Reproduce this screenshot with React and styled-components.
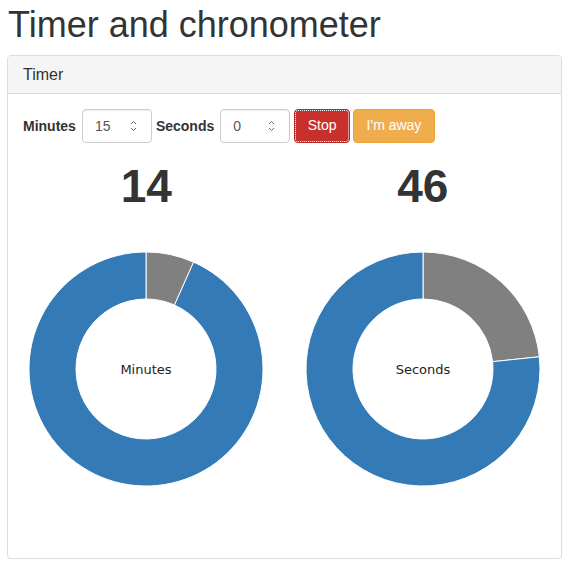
import styled, { createGlobalStyle } from "styled-components";

const GlobalStyle = createGlobalStyle`
  body {
    margin: 0;
    background: #fff;
    font-family: "Liberation Sans", Arial, sans-serif;
    font-size: 14px;
    color: #333;
  }
`;

const Page = styled.div`
  padding: 0 5px 0 7px;
`;

const Title = styled.h1`
  margin: 5px 0 10px 1px;
  font-size: 36px;
  font-weight: 400;
  line-height: 1.1;
  color: #333;
`;

const Panel = styled.div`
  border: 1px solid #ddd;
  border-radius: 4px;
  box-shadow: 0 1px 1px rgba(0, 0, 0, 0.05);
  background: #fff;
`;

const PanelHeading = styled.div`
  padding: 10px 15px;
  background: #f5f5f5;
  border-bottom: 1px solid #ddd;
  border-radius: 3px 3px 0 0;
  font-size: 16px;
  line-height: 1.1;
  color: #333;
`;

const PanelBody = styled.div`
  padding: 15px;
`;

const Form = styled.div`
  display: flex;
  align-items: center;
  gap: 4px;
`;

const Label = styled.label`
  font-weight: 700;
  font-size: 14px;
  margin-right: 2px;
`;

const Spinner = styled.div`
  display: flex;
  align-items: center;
  justify-content: space-between;
  box-sizing: border-box;
  width: 70px;
  height: 34px;
  padding: 0 14px 0 12px;
  border: 1px solid #ccc;
  border-radius: 4px;
  box-shadow: inset 0 1px 1px rgba(0, 0, 0, 0.075);
  font-size: 14px;
  color: #555;
`;

const Button = styled.button`
  height: 34px;
  padding: 6px 12.5px;
  font-family: inherit;
  font-size: 14px;
  line-height: 1.42857;
  color: #fff;
  border: 1px solid ${(p) => p.$border};
  background: ${(p) => p.$bg};
  border-radius: 4px;
  outline: ${(p) => (p.$focused ? "1px dotted #fff" : "none")};
  outline-offset: -2px;
  margin-left: ${(p) => p.$gap || 0}px;
`;

const Row = styled.div`
  display: grid;
  grid-template-columns: 1fr 1fr;
  margin: 0 -15px;
`;

const Col = styled.div`
  padding: 0 15px;
  display: flex;
  flex-direction: column;
  align-items: center;
`;

const Count = styled.div`
  margin-top: 18px;
  font-size: 46px;
  font-weight: 700;
  line-height: 1.1;
  color: #333;
`;

const Chart = styled.svg`
  display: block;
  margin: 39px 0 56px;
`;

const ChartLabel = styled.text`
  font-family: "DejaVu Sans", sans-serif;
  font-size: 13px;
  fill: #222;
`;

function Arrows() {
  return (
    <svg width="7" height="12" viewBox="0 0 7 12">
      <path d="M1 4 L3.5 1.5 L6 4" fill="none" stroke="#666" strokeWidth="1" />
      <path d="M1 8 L3.5 10.5 L6 8" fill="none" stroke="#666" strokeWidth="1" />
    </svg>
  );
}

function arc(cx, cy, ro, ri, a0, a1) {
  const pt = (r, f) => {
    const a = f * 2 * Math.PI - Math.PI / 2;
    return [cx + r * Math.cos(a), cy + r * Math.sin(a)];
  };
  const large = a1 - a0 > 0.5 ? 1 : 0;
  const [x0, y0] = pt(ro, a0);
  const [x1, y1] = pt(ro, a1);
  const [x2, y2] = pt(ri, a1);
  const [x3, y3] = pt(ri, a0);
  return `M${x0} ${y0} A${ro} ${ro} 0 ${large} 1 ${x1} ${y1} L${x2} ${y2} A${ri} ${ri} 0 ${large} 0 ${x3} ${y3} Z`;
}

function Donut({ done, total, label }) {
  const split = done / total;
  return (
    <Chart width="236" height="236" viewBox="0 0 236 236">
      <path d={arc(118, 118, 117, 70, 0, split)} fill="#808080" stroke="#fff" strokeWidth="1" />
      <path d={arc(118, 118, 117, 70, split, 1)} fill="#337ab7" stroke="#fff" strokeWidth="1" />
      <ChartLabel x="118" y="123" textAnchor="middle">
        {label}
      </ChartLabel>
    </Chart>
  );
}

export default function App() {
  return (
    <Page>
      <GlobalStyle />
      <Title>Timer and chronometer</Title>
      <Panel>
        <PanelHeading>Timer</PanelHeading>
        <PanelBody>
          <Form>
            <Label>Minutes</Label>
            <Spinner>
              <span>15</span>
              <Arrows />
            </Spinner>
            <Label>Seconds</Label>
            <Spinner>
              <span>0</span>
              <Arrows />
            </Spinner>
            <Button $bg="#c9302c" $border="#ac2925" $focused>
              Stop
            </Button>
            <Button $bg="#f0ad4e" $border="#eea236" $gap={-1}>
              I'm away
            </Button>
          </Form>
          <Row>
            <Col>
              <Count>14</Count>
              <Donut done={1} total={15} label="Minutes" />
            </Col>
            <Col>
              <Count>46</Count>
              <Donut done={14} total={60} label="Seconds" />
            </Col>
          </Row>
        </PanelBody>
      </Panel>
    </Page>
  );
}
